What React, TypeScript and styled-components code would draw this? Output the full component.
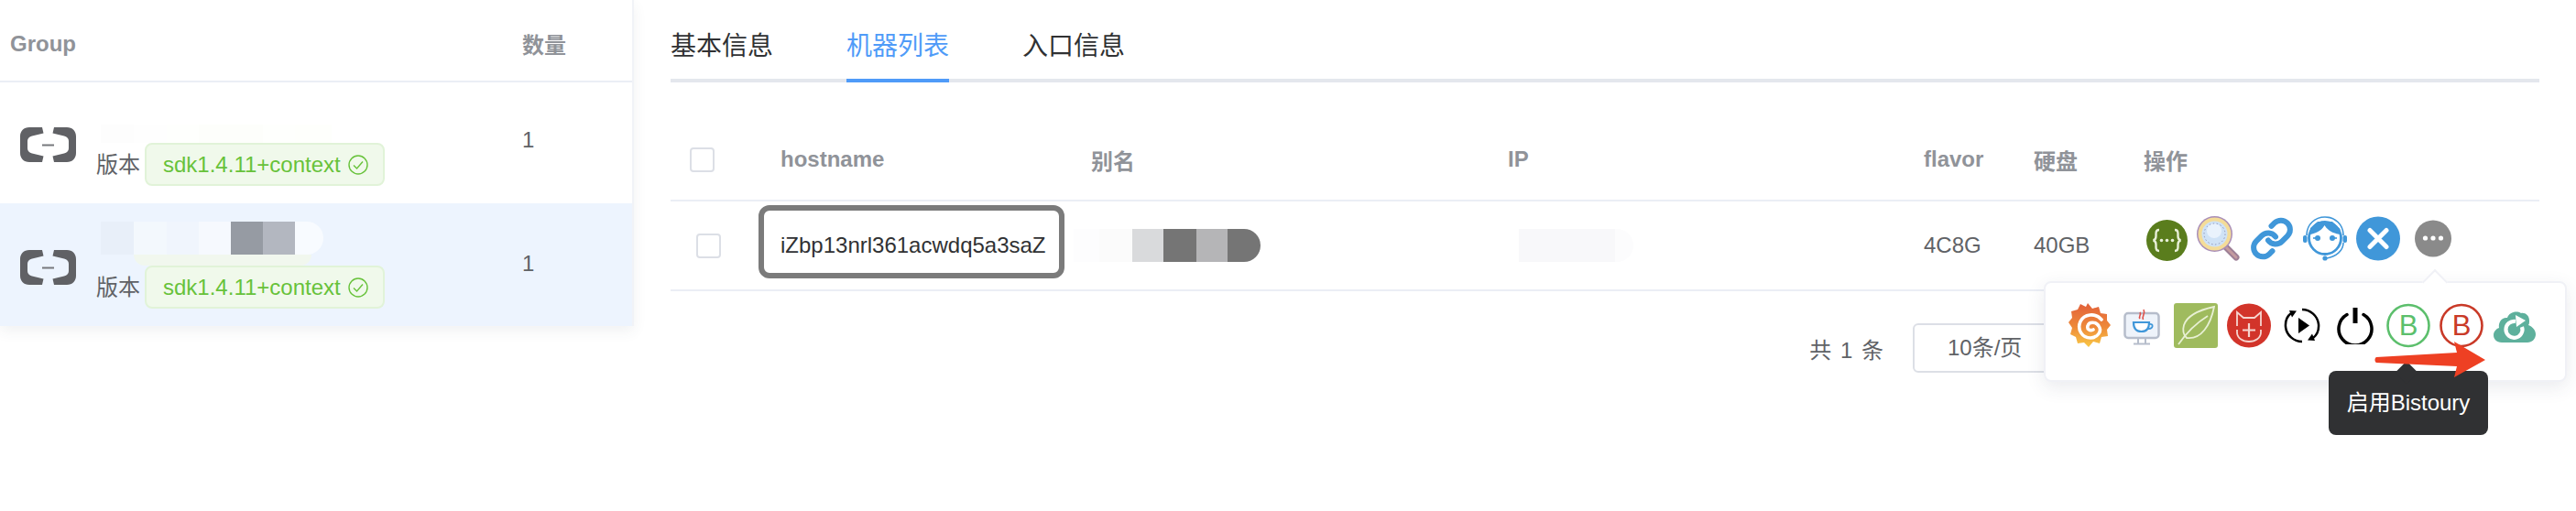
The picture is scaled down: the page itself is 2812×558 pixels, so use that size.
import React from "react";
import styled, { createGlobalStyle, css } from "styled-components";

const GlobalStyle = createGlobalStyle`
  html, body {
    margin: 0;
    padding: 0;
    background: #fff;
  }
  body {
    font-family: "Liberation Sans", "Noto Sans CJK SC", sans-serif;
    color: #606266;
  }
`;

const Page = styled.div`
  display: flex;
  width: 2812px;
  height: 558px;
  overflow: hidden;
  background: #fff;
`;

/* left group list */
const GroupPanel = styled.div`
  width: 692px;
  height: 356px;
  flex-shrink: 0;
  border-right: 2px solid #f1f3f7;
  box-sizing: border-box;
  box-shadow: 0 6px 14px rgba(60, 70, 90, 0.07);
`;

const GroupHead = styled.div`
  display: grid;
  grid-template-columns: 559px 1fr;
  align-items: center;
  height: 90px;
  padding: 8px 0 0 11px;
  box-sizing: border-box;
  border-bottom: 2px solid #ebeef5;
  font-size: 24px;
  font-weight: 700;
  color: #909399;
`;

const GroupCount = styled.span`
  margin-top: -2px;
`;

const GroupRow = styled.div<{ $active?: boolean; $height: number }>`
  display: grid;
  grid-template-columns: 105px 443px 1fr;
  height: ${(p) => p.$height}px;
  box-sizing: border-box;
  padding-left: 22px;
  ${(p) =>
    p.$active &&
    css`
      background: #edf4fe;
    `}
`;

const LogoCell = styled.div<{ $top: number }>`
  padding-top: ${(p) => p.$top}px;
`;

const GroupInfo = styled.div<{ $top: number }>`
  padding-top: ${(p) => p.$top}px;
  margin-left: -22px;
`;

const Mosaic = styled.div<{ $height: number }>`
  display: flex;
  height: ${(p) => p.$height}px;
  margin-left: 5px;
`;

const Pixel = styled.div<{ $w: number; $color: string; $round?: boolean }>`
  width: ${(p) => p.$w}px;
  background: ${(p) => p.$color};
  ${(p) =>
    p.$round &&
    css`
      border-radius: 0 18px 18px 0;
    `}
`;

const FaintTrail = styled.div`
  width: 194px;
  height: 12px;
  margin-left: 41px;
  background: #f1f7ee;
  border-radius: 0 0 16px 16px;
`;

const VersionLine = styled.div`
  display: flex;
  align-items: center;
  font-size: 24px;
  color: #606266;
  line-height: 47px;
`;

const VersionLabel = styled.span`
  width: 53px;
  flex-shrink: 0;
`;

const VersionTag = styled.span`
  display: inline-flex;
  align-items: center;
  gap: 8px;
  width: 262px;
  height: 47px;
  padding: 0 0 0 18px;
  box-sizing: border-box;
  background: #f0f9eb;
  border: 2px solid #e1f3d8;
  border-radius: 8px;
  color: #67c23a;
  font-size: 24px;
`;

const CountCell = styled.div<{ $top: number }>`
  padding-top: ${(p) => p.$top}px;
  font-size: 24px;
  line-height: 28px;
  color: #606266;
`;

/* right detail */
const Detail = styled.div`
  flex: 1;
  padding: 0 40px;
  min-width: 0;
`;

const Tabs = styled.div`
  display: flex;
  gap: 80px;
  height: 90px;
  box-sizing: border-box;
  border-bottom: 4px solid #e4e7ed;
`;

const Tab = styled.div<{ $active?: boolean }>`
  height: 90px;
  box-sizing: border-box;
  padding-top: 33px;
  font-size: 28px;
  line-height: 36px;
  color: ${(p) => (p.$active ? "#4f9bf8" : "#303133")};
  border-bottom: 4px solid ${(p) => (p.$active ? "#4f9bf8" : "transparent")};
`;

const Table = styled.div`
  margin-top: 40px;
`;

const TableRow = styled.div<{ $height: number; $head?: boolean }>`
  display: grid;
  grid-template-columns: 120px 339px 455px 454px 120px 120px 1fr;
  align-items: center;
  height: ${(p) => p.$height}px;
  box-sizing: border-box;
  border-bottom: 2px solid #ebeef5;
  font-size: 24px;
  color: ${(p) => (p.$head ? "#909399" : "#606266")};
  font-weight: ${(p) => (p.$head ? 700 : 400)};
`;

const Check = styled.span<{ $inset: number }>`
  display: block;
  width: 27px;
  height: 27px;
  margin-left: ${(p) => p.$inset}px;
  box-sizing: border-box;
  border: 2px solid #dcdfe6;
  border-radius: 4px;
  background: #fff;
`;

const HostCell = styled.div`
  position: relative;
  color: #303133;

  &::before {
    content: "";
    position: absolute;
    left: -24px;
    top: -30px;
    width: 334px;
    height: 80px;
    box-sizing: border-box;
    border: 6px solid #7b7b7b;
    border-radius: 12px;
  }
`;

const CellMosaic = styled.div`
  display: flex;
  height: 36px;
  margin-left: -19px;
`;

const IpMosaic = styled.div`
  display: flex;
  height: 36px;
  margin-left: 12px;
`;

const OpsCell = styled.div`
  position: relative;
  display: flex;
  align-items: flex-start;
  align-self: start;
  height: 52px;
  margin: 16px 0 0 3px;
`;

const IconSlot = styled.span<{ $w: number; $gap: number; $top?: number }>`
  display: block;
  width: ${(p) => p.$w}px;
  margin-right: ${(p) => p.$gap}px;
  margin-top: ${(p) => p.$top ?? 0}px;
  line-height: 0;
  flex-shrink: 0;
`;

/* popover under the ellipsis button */
const Popover = styled.div`
  position: absolute;
  left: -112px;
  top: 71px;
  width: 571px;
  height: 110px;
  box-sizing: border-box;
  padding: 22px 0 0 25px;
  display: flex;
  align-items: flex-start;
  background: #fff;
  border: 2px solid #f0f1f6;
  border-radius: 8px;
  box-shadow: 0 6px 20px rgba(50, 60, 90, 0.1);
  z-index: 2;

  &::before {
    content: "";
    position: absolute;
    left: 415px;
    top: -11px;
    width: 18px;
    height: 18px;
    background: #fff;
    border-left: 2px solid #f0f1f6;
    border-top: 2px solid #f0f1f6;
    transform: rotate(45deg);
  }
`;

const Tooltip = styled.div`
  position: absolute;
  left: 309px;
  top: 96px;
  width: 174px;
  height: 70px;
  background: #303133;
  border-radius: 8px;
  color: #fff;
  font-size: 24px;
  font-weight: 400;
  line-height: 70px;
  text-align: center;
  z-index: 3;

  &::before {
    content: "";
    position: absolute;
    left: 76px;
    top: -7px;
    width: 18px;
    height: 18px;
    background: #303133;
    border-radius: 3px;
    transform: rotate(45deg);
  }
`;

const RedArrow = styled.svg`
  position: absolute;
  left: 359px;
  top: 64px;
  z-index: 4;
`;

const Pager = styled.div`
  display: flex;
  align-items: center;
  justify-content: flex-end;
  gap: 32px;
  margin-top: 35px;
  padding-right: 492px;
  font-size: 24px;
  color: #606266;
`;

const PagerTotal = styled.span`
  word-spacing: 3px;
`;

const PageSize = styled.div`
  width: 192px;
  height: 54px;
  box-sizing: border-box;
  padding-left: 36px;
  border: 2px solid #dcdfe6;
  border-radius: 6px;
  line-height: 50px;
`;

/* drawings */
const AliyunLogo = () => (
  <svg width="61" height="38" viewBox="0 0 61 38">
    <path fill="#606165" d="M24 0H10C4 0 0 4 0 10v18c0 6 4 10 10 10h14l1.500-6.500L13 28.500c-3-.8-5-2.600-5-5.500v-8c0-2.900 2-4.700 5-5.500L25.500 6.500z" />
    <path fill="#606165" d="M37 0h14c6 0 10 4 10 10v18c0 6-4 10-10 10H37l-1.500-6.500L48 28.500c3-.8 5-2.600 5-5.500v-8c0-2.900-2-4.700-5-5.500L35.500 6.500z" />
    <rect x="24" y="18.500" width="13" height="2" fill="#77787c" />
  </svg>
);

const CheckCircle = () => (
  <svg width="22" height="22" viewBox="0 0 22 22" fill="none" stroke="#67c23a" strokeWidth="1.400">
    <circle cx="11" cy="11" r="10" />
    <path d="M6 11.500l3.500 3.500L16 7.500" />
  </svg>
);

const SwaggerIcon = () => (
  <svg width="45" height="45" viewBox="0 0 45 45">
    <circle cx="22.500" cy="22.500" r="22.500" fill="#5a7d1d" />
    <g fill="none" stroke="#e8efd8" strokeWidth="2.400">
      <path d="M14 11c-3 0-3.500 1.500-3.500 4v3c0 2.500-1 4-3 4.500 2 .5 3 2 3 4.500v3c0 2.500.5 4 3.500 4" />
      <path d="M31 11c3 0 3.500 1.500 3.500 4v3c0 2.500 1 4 3 4.500-2 .5-3 2-3 4.500v3c0 2.500-.5 4-3.500 4" />
    </g>
    <circle cx="16.500" cy="22.500" r="1.800" fill="#e8efd8" />
    <circle cx="22.500" cy="22.500" r="1.800" fill="#e8efd8" />
    <circle cx="28.500" cy="22.500" r="1.800" fill="#e8efd8" />
  </svg>
);

const MagnifierIcon = () => (
  <svg width="48" height="49" viewBox="0 0 48 49">
    <path d="M31 33l12 12" stroke="#9d7f96" strokeWidth="7" strokeLinecap="round" />
    <path d="M31 33l12 12" stroke="#c49ba0" strokeWidth="3" strokeLinecap="round" />
    <circle cx="19.500" cy="19.500" r="19.500" fill="#a98eb8" />
    <circle cx="19.500" cy="19.500" r="18" fill="#f4dc98" />
    <circle cx="19.500" cy="19.500" r="14" fill="#cfe2f6" />
    <circle cx="19" cy="16" r="8" fill="#e9f2fc" />
    <circle cx="19.500" cy="19.500" r="11.500" fill="none" stroke="#8d93b8" strokeWidth="1" strokeDasharray="1.500 2.500" />
  </svg>
);

const LinkIcon = () => (
  <svg width="48" height="49" viewBox="0 0 24 24" fill="none" stroke="#4097d9" strokeWidth="3" strokeLinecap="round" strokeLinejoin="round">
    <path d="M10 13a5 5 0 0 0 7.540.54l3-3a5 5 0 0 0-7.070-7.070l-1.720 1.710" />
    <path d="M14 11a5 5 0 0 0-7.540-.54l-3 3a5 5 0 0 0 7.070 7.070l1.710-1.710" />
  </svg>
);

const AgentIcon = () => (
  <svg width="48" height="49" viewBox="0 0 48 49" fill="none" stroke="#4097d9">
    <path d="M4 21C4 9 13 1 24 1s20 8 20 20" strokeWidth="1.600" />
    <circle cx="24" cy="24" r="17.500" strokeWidth="2.800" />
    <path d="M7.500 20c5-1 12-3 16-10 3 5 9 9 17 10V14L32 6H16L8 13z" fill="#4097d9" stroke="none" />
    <rect x="0" y="21" width="4.500" height="8" rx="2" fill="#4097d9" stroke="none" />
    <rect x="43.500" y="21" width="4.500" height="8" rx="2" fill="#4097d9" stroke="none" />
    <path d="M44 29c0 9-8 15-18 17" strokeWidth="1.600" />
    <circle cx="24" cy="46" r="2.600" fill="#4097d9" stroke="none" />
    <circle cx="16" cy="24" r="3" fill="#4097d9" stroke="none" />
    <circle cx="32" cy="24" r="3" fill="#4097d9" stroke="none" />
    <rect x="11" y="23.200" width="5" height="1.600" fill="#4097d9" stroke="none" />
    <rect x="32" y="23.200" width="5" height="1.600" fill="#4097d9" stroke="none" />
  </svg>
);

const CloseIcon = () => (
  <svg width="48" height="49" viewBox="0 0 48 49">
    <circle cx="24" cy="24.500" r="24" fill="#4097d9" />
    <path d="M15 15.500l18 18M33 15.500l-18 18" stroke="#fff" strokeWidth="5" strokeLinecap="round" />
  </svg>
);

const MoreIcon = () => (
  <svg width="40" height="41" viewBox="0 0 40 41">
    <circle cx="20" cy="20.500" r="20" fill="#8a8a8a" />
    <circle cx="11.500" cy="20" r="2.600" fill="#fff" />
    <circle cx="20" cy="20" r="2.600" fill="#fff" />
    <circle cx="28.500" cy="20" r="2.600" fill="#fff" />
  </svg>
);

const GrafanaIcon = () => (
  <svg width="46" height="49" viewBox="0 0 46 49">
    <defs>
      <linearGradient id="grafanaFill" x1="0" y1="0" x2="0" y2="1">
        <stop offset="0" stopColor="#e2603a" />
        <stop offset="0.55" stopColor="#ee8a3a" />
        <stop offset="1" stopColor="#f9c845" />
      </linearGradient>
    </defs>
    <path fill="url(#grafanaFill)" d="M21 0l5 6 7-2 2 7 7 1 0 7 4 5-4 5 1 7-7 1-2 7-7-2-5 6-5-5-7 1-2-7-6-3 2-7-4-6 4-5-1-7 7-2 3-6 6 3z" />
    <path fill="none" stroke="#fff" strokeWidth="3.600" strokeLinecap="round" d="M36 18C29 10 17 12 13 20c-4 9 2 18 11 18 8 0 13-8 9-13-3-5-11-5-12 0-1 3 2 6 6 4" />
  </svg>
);

const JavaMonitorIcon = () => (
  <svg width="40" height="43" viewBox="0 0 40 43" fill="none">
    <rect x="1.500" y="7" width="37" height="27" rx="3.500" fill="#eef3fa" stroke="#b6bdcb" strokeWidth="2.500" />
    <path d="M16 34v6M24 34v6M11 40.500h18" stroke="#b6bdcb" strokeWidth="2" />
    <path d="M11 17h17c0 6-2 10-8.500 10S11 23 11 17z" fill="#fff" stroke="#4097d9" strokeWidth="2.200" />
    <path d="M28 19c5-1 5 5-1 5" stroke="#4097d9" strokeWidth="1.800" />
    <path d="M18 13c-2-3 2-4 0-7 M21.500 14c-2-4 3-6 .5-11" stroke="#e0514a" strokeWidth="1.600" />
  </svg>
);

const LeafIcon = () => (
  <svg width="48" height="49" viewBox="0 0 48 49" fill="none">
    <rect width="48" height="49" rx="3" fill="#9fbb5e" />
    <path d="M44 4C30 7 15 12 11 24c-2 7 1 12 3 14 16 2 26-14 30-34z" stroke="#e8f0d4" strokeWidth="1.800" />
    <path d="M5 45C14 32 24 22 37 14" stroke="#e8f0d4" strokeWidth="1.800" />
  </svg>
);

const ArthasIcon = () => (
  <svg width="48" height="49" viewBox="0 0 48 49" fill="none">
    <circle cx="24" cy="24.500" r="24" fill="#d2342a" />
    <path d="M11 25V10l7 6h12l7-6v15" stroke="#f6d5cf" strokeWidth="1.800" />
    <path d="M11 29v3c0 6 6 10 13 10s13-4 13-10v-3" stroke="#f6d5cf" strokeWidth="1.800" />
    <path d="M24 22v15M17 29.500h14" stroke="#f6d5cf" strokeWidth="2.200" />
  </svg>
);

const RestartIcon = () => (
  <svg width="40" height="41" viewBox="0 0 40 41" fill="none" stroke="#000" strokeWidth="2.500">
    <path d="M20 3c9 0 17 7 18 16 .5 6-2 12-6 15" />
    <path d="M20 38C11 38 3 31 2 22c-.5-6 2-12 6-15" />
    <path d="M6 4l8 .5-5 7z" fill="#000" stroke="none" />
    <path d="M34 37l-8-.5 5-7z" fill="#000" stroke="none" />
    <path d="M16 12l12 8.500-12 8.500z" fill="#000" stroke="none" />
  </svg>
);

const PowerIcon = () => (
  <svg width="40" height="41" viewBox="0 0 40 41" fill="none" stroke="#000">
    <path d="M11 8.500a18 18 0 1 0 18 0" strokeWidth="3.500" strokeLinecap="round" />
    <path d="M20 1v17" strokeWidth="5" />
  </svg>
);

const BadgeIcon = ({ color }: { color: string }) => (
  <svg width="48" height="49" viewBox="0 0 48 49">
    <circle cx="24" cy="24.500" r="22.500" fill="none" stroke={color} strokeWidth="2.600" />
    <text x="24" y="35" textAnchor="middle" fontSize="31" fill={color} fontFamily="Liberation Sans, sans-serif">
      B
    </text>
  </svg>
);

const CloudIcon = () => (
  <svg width="46" height="40" viewBox="0 0 46 40">
    <path fill="#5eb09c" d="M9 39C3 39 0 35 0 31c0-4 3-7 6-8-1-6 3-12 9-11 2-6 10-8 15-5 4-1 9 2 9 8 0 2 0 4-1 5 5 2 8 6 8 10 0 5-4 9-9 9z" />
    <path fill="none" stroke="#fff" strokeWidth="4.200" d="M31 22a9 9 0 1 1-7-6" />
    <path fill="#fff" d="M24 9l11 6-10 7z" />
  </svg>
);

const opsIcons = [
  { w: 45, gap: 10, top: 4, icon: <SwaggerIcon /> },
  { w: 48, gap: 10, top: 0, icon: <MagnifierIcon /> },
  { w: 48, gap: 10, top: 0, icon: <LinkIcon /> },
  { w: 48, gap: 10, top: 0, icon: <AgentIcon /> },
  { w: 48, gap: 16, top: 0, icon: <CloseIcon /> },
  { w: 40, gap: 0, top: 4, icon: <MoreIcon /> },
];

const moreIcons = [
  { w: 46, gap: 14, top: 0, icon: <GrafanaIcon /> },
  { w: 40, gap: 15, top: 4, icon: <JavaMonitorIcon /> },
  { w: 48, gap: 10, top: 0, icon: <LeafIcon /> },
  { w: 48, gap: 14, top: 0, icon: <ArthasIcon /> },
  { w: 40, gap: 18, top: 4, icon: <RestartIcon /> },
  { w: 40, gap: 14, top: 4, icon: <PowerIcon /> },
  { w: 48, gap: 10, top: 0, icon: <BadgeIcon color="#5cbf6c" /> },
  { w: 48, gap: 11, top: 0, icon: <BadgeIcon color="#c93a28" /> },
  { w: 46, gap: 0, top: 4, icon: <CloudIcon /> },
];

const row1Blur = [
  { w: 36, color: "#fdfdfd" },
  { w: 36, color: "#fefefe" },
  { w: 35, color: "#fefffd" },
  { w: 35, color: "#fdfefb" },
  { w: 35, color: "#fdfefb" },
  { w: 35, color: "#fefffd" },
  { w: 40, color: "#fefffc" },
];

const row2Blur = [
  { w: 36, color: "#e8eff9" },
  { w: 36, color: "#f3f8fd" },
  { w: 35, color: "#f0f5fd" },
  { w: 35, color: "#f6f9fe" },
  { w: 35, color: "#969ba3" },
  { w: 35, color: "#b3b7c0" },
  { w: 31, color: "#f8fbff", round: true },
];

const aliasBlur = [
  { w: 28, color: "#fdfdfe" },
  { w: 36, color: "#fbfbfb" },
  { w: 34, color: "#d9dadc" },
  { w: 36, color: "#757575" },
  { w: 34, color: "#b5b5b7" },
  { w: 36, color: "#757575", round: true },
];

const App = () => {
  return (
    <Page>
      <GlobalStyle />
      <GroupPanel>
        <GroupHead>
          <span>Group</span>
          <GroupCount>数量</GroupCount>
        </GroupHead>

        <GroupRow $height={132}>
          <LogoCell $top={49}>
            <AliyunLogo />
          </LogoCell>
          <GroupInfo $top={46}>
            <Mosaic $height={20}>
              {row1Blur.map((p, i) => (
                <Pixel key={i} $w={p.w} $color={p.color} />
              ))}
            </Mosaic>
            <VersionLine>
              <VersionLabel>版本</VersionLabel>
              <VersionTag>
                sdk1.4.11+context
                <CheckCircle />
              </VersionTag>
            </VersionLine>
          </GroupInfo>
          <CountCell $top={49}>1</CountCell>
        </GroupRow>

        <GroupRow $active $height={134}>
          <LogoCell $top={51}>
            <AliyunLogo />
          </LogoCell>
          <GroupInfo $top={20}>
            <Mosaic $height={36}>
              {row2Blur.map((p, i) => (
                <Pixel key={i} $w={p.w} $color={p.color} $round={p.round} />
              ))}
            </Mosaic>
            <FaintTrail />
            <VersionLine>
              <VersionLabel>版本</VersionLabel>
              <VersionTag>
                sdk1.4.11+context
                <CheckCircle />
              </VersionTag>
            </VersionLine>
          </GroupInfo>
          <CountCell $top={52}>1</CountCell>
        </GroupRow>
      </GroupPanel>

      <Detail>
        <Tabs>
          <Tab>基本信息</Tab>
          <Tab $active>机器列表</Tab>
          <Tab>入口信息</Tab>
        </Tabs>

        <Table>
          <TableRow $head $height={90}>
            <Check $inset={21} />
            <span>hostname</span>
            <span>别名</span>
            <span>IP</span>
            <span>flavor</span>
            <span>硬盘</span>
            <span>操作</span>
          </TableRow>
          <TableRow $height={98}>
            <Check $inset={28} />
            <HostCell>iZbp13nrl361acwdq5a3saZ</HostCell>
            <CellMosaic>
              {aliasBlur.map((p, i) => (
                <Pixel key={i} $w={p.w} $color={p.color} $round={p.round} />
              ))}
            </CellMosaic>
            <IpMosaic>
              <Pixel $w={105} $color="#f8f8fa" />
              <Pixel $w={20} $color="#fcfcfd" $round />
            </IpMosaic>
            <span>4C8G</span>
            <span>40GB</span>
            <OpsCell>
              {opsIcons.map((item, i) => (
                <IconSlot key={i} $w={item.w} $gap={item.gap} $top={item.top}>
                  {item.icon}
                </IconSlot>
              ))}
              <Popover>
                {moreIcons.map((item, i) => (
                  <IconSlot key={i} $w={item.w} $gap={item.gap} $top={item.top}>
                    {item.icon}
                  </IconSlot>
                ))}
                <RedArrow width="122" height="40" viewBox="0 0 122 40">
                  <path fill="#ee4023" d="M2 17c-2 1-2 5 0 6l88 4-3 12 34-19L87 0l3 12z" />
                </RedArrow>
                <Tooltip>启用Bistoury</Tooltip>
              </Popover>
            </OpsCell>
          </TableRow>
        </Table>

        <Pager>
          <PagerTotal>共 1 条</PagerTotal>
          <PageSize>10条/页</PageSize>
        </Pager>
      </Detail>
    </Page>
  );
};

export default App;
